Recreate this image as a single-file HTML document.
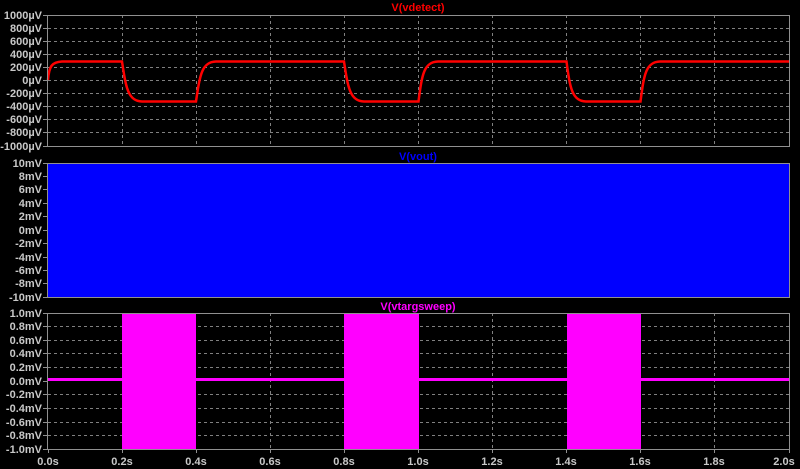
<!DOCTYPE html><html><head><style>body{margin:0;background:#000;width:800px;height:469px;overflow:hidden}svg{display:block}text{font-family:"Liberation Sans",sans-serif;font-weight:bold;font-size:11px;fill:#c8c8c8}</style></head><body>
<svg width="800" height="469" xmlns="http://www.w3.org/2000/svg">
<g stroke="#808080" stroke-dasharray="3,3" stroke-width="1">
<path d="M48 28.5H789M48 41.5H789M48 54.5H789M48 67.5H789M48 80.5H789M48 93.5H789M48 106.5H789M48 119.5H789M48 132.5H789"/>
<path d="M122.5 15V146M196.5 15V146M270.5 15V146M344.5 15V146M418.5 15V146M492.5 15V146M566.5 15V146M640.5 15V146M714.5 15V146"/>
<path d="M48 326.5H789M48 340.5H789M48 353.5H789M48 367.5H789M48 394.5H789M48 408.5H789M48 422.5H789M48 435.5H789"/>
<path d="M270.5 313V449M492.5 313V449M714.5 313V449"/>
</g>
<rect x="48" y="163" width="741" height="134" fill="#0000ff"/>
<g fill="#ff00ff"><rect x="122" y="313" width="74" height="136"/><rect x="344" y="313" width="75" height="136"/><rect x="567" y="313" width="74" height="136"/><rect x="48" y="378" width="741" height="3"/></g>
<path fill="none" stroke="#ff0000" stroke-width="2.5" d="M48 80 C49 66,52 62,62 61.5 H122 C126 88,128 101,142 101.5 H196 C200 74,202 62,216 61.5 H344 C348 88,350 101,364 101.5 H418.5 C422 74,424 62,438 61.5 H566.5 C570 88,572 101,586 101.5 H640.5 C644 74,646 62,660 61.5 H789"/>
<g fill="none" stroke="#909090" stroke-width="1">
<rect x="47.5" y="15.5" width="742" height="131"/>
<rect x="47.5" y="163.5" width="742" height="134"/>
<rect x="47.5" y="313.5" width="742" height="136"/>
<path d="M43 15.5h5M43 28.5h5M43 41.5h5M43 54.5h5M43 67.5h5M43 80.5h5M43 93.5h5M43 106.5h5M43 119.5h5M43 132.5h5M43 146.5h5"/>
<path d="M43 163.5h5M43 176.5h5M43 189.5h5M43 203.5h5M43 216.5h5M43 230.5h5M43 243.5h5M43 257.5h5M43 270.5h5M43 283.5h5M43 297.5h5"/>
<path d="M43 313.5h5M43 326.5h5M43 340.5h5M43 353.5h5M43 367.5h5M43 381.5h5M43 394.5h5M43 408.5h5M43 422.5h5M43 435.5h5M43 449.5h5"/>
<path d="M48.5 449v4M122.5 449v4M196.5 449v4M270.5 449v4M344.5 449v4M418.5 449v4M492.5 449v4M566.5 449v4M640.5 449v4M714.5 449v4M789.5 449v4"/>
</g>
<g text-anchor="end">
<text x="42" y="19">1000µV</text><text x="42" y="32">800µV</text><text x="42" y="45">600µV</text><text x="42" y="58">400µV</text><text x="42" y="71">200µV</text><text x="42" y="84">0µV</text><text x="42" y="97">-200µV</text><text x="42" y="110">-400µV</text><text x="42" y="123">-600µV</text><text x="42" y="136">-800µV</text><text x="42" y="150">-1000µV</text>
<text x="42" y="167">10mV</text><text x="42" y="180">8mV</text><text x="42" y="193">6mV</text><text x="42" y="207">4mV</text><text x="42" y="220">2mV</text><text x="42" y="234">0mV</text><text x="42" y="247">-2mV</text><text x="42" y="261">-4mV</text><text x="42" y="274">-6mV</text><text x="42" y="287">-8mV</text><text x="42" y="301">-10mV</text>
<text x="42" y="317">1.0mV</text><text x="42" y="330">0.8mV</text><text x="42" y="344">0.6mV</text><text x="42" y="357">0.4mV</text><text x="42" y="371">0.2mV</text><text x="42" y="385">0.0mV</text><text x="42" y="398">-0.2mV</text><text x="42" y="412">-0.4mV</text><text x="42" y="426">-0.6mV</text><text x="42" y="439">-0.8mV</text><text x="42" y="453">-1.0mV</text>
</g>
<g text-anchor="middle">
<text x="48" y="465">0.0s</text><text x="122" y="465">0.2s</text><text x="196" y="465">0.4s</text><text x="270" y="465">0.6s</text><text x="344" y="465">0.8s</text><text x="418" y="465">1.0s</text><text x="492" y="465">1.2s</text><text x="566" y="465">1.4s</text><text x="640" y="465">1.6s</text><text x="714" y="465">1.8s</text><text x="784" y="465">2.0s</text>
<text x="418" y="11" style="fill:#ff0000">V(vdetect)</text>
<text x="418" y="160" style="fill:#0000ff">V(vout)</text>
<text x="418" y="310" style="fill:#ff00ff">V(vtargsweep)</text>
</g>
</svg></body></html>
